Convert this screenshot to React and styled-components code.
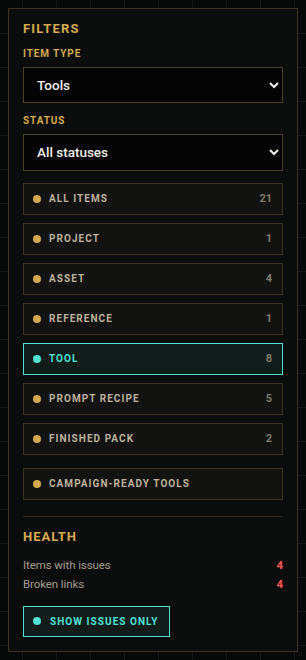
import React, { useState } from "react";
import styled, { createGlobalStyle } from "styled-components";

const GlobalStyle = createGlobalStyle`
  html, body {
    margin: 0;
    padding: 0;
  }
  body {
    background-color: #070908;
    background-image:
      linear-gradient(90deg, #131715 1px, transparent 1px),
      linear-gradient(0deg, #131715 1px, transparent 1px);
    background-size: 34px 34px;
    background-position: 22px 0, 0 0;
    font-family: Roboto, "Liberation Sans", sans-serif;
    min-height: 660px;
  }
  #root {
    padding: 8px;
  }
`;

const Panel = styled.aside`
  width: 290px;
  height: 644px;
  box-sizing: border-box;
  border: 1px solid #3b3320;
  background: #0b0d0c;
  padding: 12px 14px 14px 14px;
  display: flex;
  flex-direction: column;
`;

const Title = styled.h2`
  margin: 0;
  font-size: 13px;
  line-height: 16px;
  font-weight: 700;
  letter-spacing: 1.2px;
  color: #d6ab4f;
  text-transform: uppercase;
`;

const Label = styled.label`
  display: block;
  margin: ${(p) => p.$top}px 0 7px;
  font-size: 10px;
  line-height: 12px;
  font-weight: 700;
  letter-spacing: 0.9px;
  color: #d6ab4f;
  text-transform: uppercase;
`;

const Select = styled.select`
  display: block;
  width: 100%;
  height: 37px;
  box-sizing: border-box;
  background: #040404;
  color: #f3f1ea;
  border: 1px solid #4a3f27;
  border-radius: 0;
  padding: 0 10px 0 9px;
  font-family: Roboto, "Liberation Sans", sans-serif;
  font-size: 13.5px;
  font-weight: 500;
  outline: none;
`;

const List = styled.div`
  display: flex;
  flex-direction: column;
  gap: 8px;
  margin-top: 12px;
`;

const Chip = styled.button`
  display: flex;
  align-items: center;
  gap: 8px;
  width: ${(p) => (p.$inline ? "auto" : "100%")};
  align-self: ${(p) => (p.$inline ? "flex-start" : "stretch")};
  height: 32px;
  box-sizing: border-box;
  padding: 0 ${(p) => (p.$inline ? "12px" : "10px")} 0 9px;
  border: 1px solid ${(p) => (p.$active ? "#52e3d4" : "#3a3322")};
  background: ${(p) => (p.$active ? "#0f1c1a" : "#121310")};
  color: ${(p) => (p.$active ? "#52e3d4" : "#bdb29c")};
  font-family: Roboto, "Liberation Sans", sans-serif;
  font-size: 10px;
  font-weight: 700;
  letter-spacing: 1.05px;
  text-transform: uppercase;
  text-align: left;
  cursor: pointer;
`;

const Dot = styled.span`
  width: 8px;
  height: 8px;
  border-radius: 50%;
  flex: none;
  background: ${(p) => (p.$active ? "#52e3d4" : "#d6ab4f")};
`;

const ChipText = styled.span`
  flex: 1;
`;

const Count = styled.span`
  color: #7f7a6c;
  font-size: 11px;
  letter-spacing: 0;
`;

const Extra = styled.div`
  margin-top: 13px;
  display: flex;
`;

const Divider = styled.hr`
  border: none;
  border-top: 1px solid #2f2a1c;
  margin: 16px 0 0;
`;

const HealthTitle = styled(Title)`
  margin-top: 12px;
  letter-spacing: 1px;
`;

const Stats = styled.dl`
  margin: 12px 0 0;
  display: flex;
  flex-direction: column;
  gap: 3px;
`;

const StatRow = styled.div`
  display: flex;
  justify-content: space-between;
  align-items: center;
  font-size: 11.5px;
  letter-spacing: -0.1px;
  line-height: 16px;
`;

const StatName = styled.dt`
  color: #a39c8c;
`;

const StatValue = styled.dd`
  margin: 0;
  color: #ff5a4e;
  font-weight: 700;
`;

const IssuesButton = styled(Chip)`
  margin-top: 14px;
  gap: 9px;
  padding: 0 10px 0 9px;
`;

const types = [
  { name: "All items", count: 21 },
  { name: "Project", count: 1 },
  { name: "Asset", count: 4 },
  { name: "Reference", count: 1 },
  { name: "Tool", count: 8 },
  { name: "Prompt recipe", count: 5 },
  { name: "Finished pack", count: 2 },
];

export default function App() {
  const [active, setActive] = useState("Tool");
  return (
    <>
      <GlobalStyle />
      <Panel>
        <Title>Filters</Title>
        <Label $top={11} htmlFor="type">Item type</Label>
        <Select id="type" defaultValue="tools">
          <option value="all">All types</option>
          <option value="tools">Tools</option>
        </Select>
        <Label $top={12} htmlFor="status">Status</Label>
        <Select id="status" defaultValue="all">
          <option value="all">All statuses</option>
        </Select>
        <List>
          {types.map((t) => (
            <Chip
              key={t.name}
              $active={active === t.name}
              onClick={() => setActive(t.name)}
            >
              <Dot $active={active === t.name} />
              <ChipText>{t.name}</ChipText>
              <Count>{t.count}</Count>
            </Chip>
          ))}
        </List>
        <Extra>
          <Chip>
            <Dot />
            <ChipText>Campaign-ready tools</ChipText>
          </Chip>
        </Extra>
        <Divider />
        <HealthTitle>Health</HealthTitle>
        <Stats>
          <StatRow>
            <StatName>Items with issues</StatName>
            <StatValue>4</StatValue>
          </StatRow>
          <StatRow>
            <StatName>Broken links</StatName>
            <StatValue>4</StatValue>
          </StatRow>
        </Stats>
        <IssuesButton $active $inline>
          <Dot $active />
          <span>Show issues only</span>
        </IssuesButton>
      </Panel>
    </>
  );
}
